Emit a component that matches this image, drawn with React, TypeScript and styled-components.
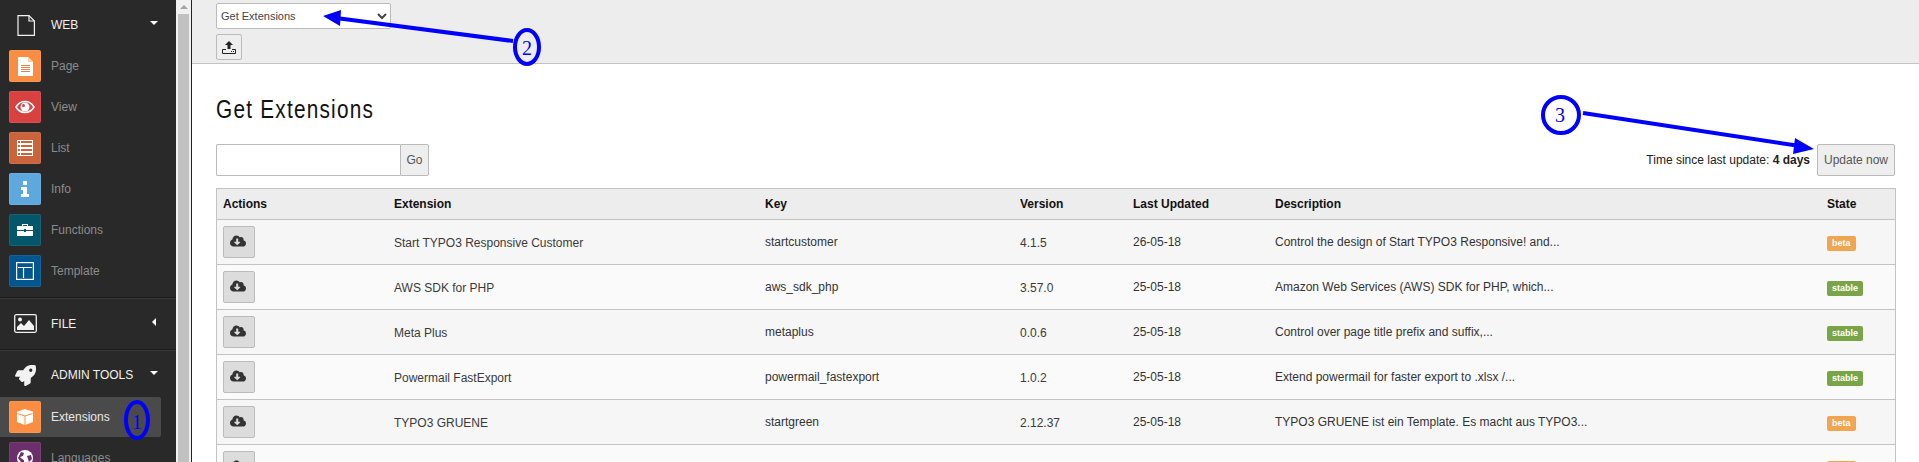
import React from "react";
import styled, { createGlobalStyle } from "styled-components";
import { FaCloudDownloadAlt, FaRocket } from "react-icons/fa";

const GlobalStyle = createGlobalStyle`
  html, body {
    margin: 0;
    padding: 0;
    height: 462px;
    overflow: hidden;
    background: #fff;
    font-family: "Liberation Sans", Arial, sans-serif;
    font-size: 12px;
    color: #333;
  }
`;

const Page = styled.div`
  position: relative;
  display: flex;
  width: 1919px;
  height: 462px;
  overflow: hidden;
`;

const Sidebar = styled.nav`
  flex: 0 0 176px;
  background: #292929;
  overflow: hidden;
`;

const GroupHeader = styled.div<{ $height: number; $top?: number }>`
  display: flex;
  align-items: center;
  box-sizing: border-box;
  height: ${(p) => p.$height}px;
  padding: ${(p) => p.$top || 0}px 18px 0 14px;
  color: #f2f2f2;
`;

const GroupIcon = styled.span`
  flex: 0 0 23px;
  display: flex;
  justify-content: center;
  margin-right: 14px;
`;

const Caret = styled.span<{ $dir: "down" | "left" }>`
  margin-left: auto;
  margin-bottom: 4px;
  width: 0;
  height: 0;
  ${(p) =>
    p.$dir === "down"
      ? `border-left: 4px solid transparent;
         border-right: 4px solid transparent;
         border-top: 4px solid #fff;`
      : `margin-right: 2px;
         border-top: 4px solid transparent;
         border-bottom: 4px solid transparent;
         border-right: 4px solid #fff;`}
`;

const Separator = styled.div<{ $top?: number }>`
  height: 1px;
  margin-top: ${(p) => p.$top || 0}px;
  background: #1a1a1a;
  box-shadow: 0 1px 0 #3a3a3a;
`;

const Item = styled.div<{ $active?: boolean }>`
  display: flex;
  align-items: center;
  box-sizing: border-box;
  width: 161px;
  height: 40px;
  margin-bottom: 1px;
  padding-left: 9px;
  border-radius: 0 2px 2px 0;
  background: ${(p) => (p.$active ? "#4a4a4a" : "transparent")};
  color: ${(p) => (p.$active ? "#e8e8e8" : "#8c8c8c")};
`;

const ItemIcon = styled.span<{ $bg: string }>`
  flex: 0 0 32px;
  display: flex;
  align-items: center;
  justify-content: center;
  box-sizing: border-box;
  height: 32px;
  margin-right: 10px;
  border-radius: 2px;
  border: 1px solid rgba(255, 255, 255, 0.08);
  background: ${(p) => p.$bg};
`;

const ScrollTrack = styled.div`
  flex: 0 0 15px;
  display: flex;
  flex-direction: column;
  box-sizing: border-box;
  padding: 0 2px;
  background: #f1f1f1;
`;

const ScrollEdge = styled.div`
  flex: 0 0 1px;
  background: #222;
`;

const ScrollArrow = styled.div`
  flex: 0 0 14px;
  display: flex;
  align-items: center;
  justify-content: center;

  &::before {
    content: "";
    border-left: 4px solid transparent;
    border-right: 4px solid transparent;
    border-bottom: 4px solid #a3a3a3;
  }
`;

const ScrollThumb = styled.div`
  flex: 1;
  background: #c1c1c1;
`;

const Main = styled.main`
  flex: 1;
  min-width: 0;
  display: flex;
  flex-direction: column;
`;

const DocHeader = styled.header`
  flex: 0 0 64px;
  display: flex;
  flex-direction: column;
  align-items: flex-start;
  gap: 5px;
  box-sizing: border-box;
  padding: 3px 24px 0;
  background: #ededed;
  border-bottom: 1px solid #c3c3c3;
`;

const ModuleSelect = styled.select`
  width: 175px;
  height: 26px;
  box-sizing: border-box;
  padding: 0;
  border: 1px solid #bbb;
  border-radius: 2px;
  background: #fff;
  font-family: "Liberation Sans", Arial, sans-serif;
  font-size: 11px;
  color: #444;
`;

const IconButton = styled.button`
  display: flex;
  align-items: center;
  justify-content: center;
  width: 26px;
  height: 26px;
  padding: 0;
  border: 1px solid #bbb;
  border-radius: 2px;
  background: #eee;
`;

const Content = styled.section`
  padding: 0 23px 0 24px;
`;

const Title = styled.h1`
  margin: 0;
  padding: 30px 0 0;
  height: 50px;
  font-family: "Liberation Sans", sans-serif;
  font-size: 25px;
  font-weight: 400;
  line-height: 30px;
  letter-spacing: 1.5px;
  color: #111;
  transform: scaleX(0.83);
  transform-origin: left center;
`;

const ToolRow = styled.div`
  display: flex;
  align-items: flex-start;
  justify-content: space-between;
  height: 44px;
`;

const SearchGroup = styled.form`
  display: flex;
  height: 32px;
  margin: 0;
`;

const SearchInput = styled.input`
  width: 184px;
  box-sizing: border-box;
  padding: 0 6px;
  border: 1px solid #bbb;
  border-right: 0;
  border-radius: 2px 0 0 2px;
  background: #fff;
`;

const GoButton = styled.button`
  width: 29px;
  padding: 0;
  border: 1px solid #bbb;
  border-radius: 0 2px 2px 0;
  background: #eee;
  font-family: "Liberation Sans", Arial, sans-serif;
  font-size: 12px;
  color: #555;
`;

const UpdateInfo = styled.div`
  display: flex;
  align-items: center;
  gap: 7px;
  margin-right: 1px;
  color: #222;
`;

const UpdateButton = styled.button`
  width: 78px;
  height: 32px;
  padding: 0;
  border: 1px solid #bbb;
  border-radius: 2px;
  background: #eee;
  font-family: "Liberation Sans", Arial, sans-serif;
  font-size: 12px;
  color: #555;
`;

const Table = styled.table`
  width: 1680px;
  table-layout: fixed;
  border-collapse: separate;
  border-spacing: 0;
  border: 1px solid #c3c3c3;
  border-bottom: 0;
`;

const HeadCell = styled.th<{ $width?: number }>`
  ${(p) => (p.$width ? `width: ${p.$width}px;` : "")}
  box-sizing: border-box;
  height: 31px;
  padding: 0 6px;
  border-bottom: 1px solid #c3c3c3;
  background: #ededed;
  text-align: left;
  font-size: 12px;
  font-weight: 700;
  color: #111;
`;

const Row = styled.tr<{ $odd: boolean }>`
  background: ${(p) => (p.$odd ? "#f6f6f6" : "#fafafa")};
`;

const Cell = styled.td<{ $lowered?: boolean }>`
  box-sizing: border-box;
  height: 45px;
  padding: ${(p) => (p.$lowered ? 2 : 0)}px 6px 0;
  border-bottom: 1px solid #c3c3c3;
  vertical-align: middle;
  color: ${(p) => (p.$lowered ? "#3a3a3a" : "#333")};
  white-space: nowrap;
  overflow: hidden;
`;

const DownloadButton = styled.button`
  display: flex;
  align-items: center;
  justify-content: center;
  width: 32px;
  height: 32px;
  padding: 0 2px 3px 0;
  border: 1px solid #bbb;
  border-radius: 2px;
  background: #dcdcdc;
  color: #333;
`;

const Badge = styled.span<{ $state: string }>`
  display: inline-block;
  box-sizing: border-box;
  height: 15px;
  padding: 0 5px;
  border-radius: 2px;
  background: ${(p) => (p.$state === "beta" ? "#f0a54e" : "#79a548")};
  color: #fff;
  font-size: 9px;
  font-weight: 700;
  line-height: 14px;
`;

const Overlay = styled.svg`
  position: absolute;
  top: 0;
  left: 0;
  pointer-events: none;
`;

const Mark = styled.text`
  font-family: "Liberation Serif", serif;
  font-size: 20px;
  fill: #0000ff;
  text-anchor: middle;
`;

const PageIcon = () => (
  <svg width="15" height="19" viewBox="0 0 15 19">
    <path d="M0 0h10l5 5v14H0z" fill="#fff" />
    <path d="M10 0l5 5h-5z" fill="#fbd0ae" />
    <path d="M3 8.500h9M3 10.500h9M3 12.500h9M3 14.500h9" stroke="#e8824a" strokeWidth="1" />
  </svg>
);

const ViewIcon = () => (
  <svg width="20" height="14" viewBox="0 0 20 14">
    <path
      d="M1 7c2-3.400 5-5.500 9-5.500s7 2.100 9 5.500c-2 3.400-5 5.500-9 5.500S3 10.400 1 7z"
      fill="none"
      stroke="#fff"
      strokeWidth="1.500"
    />
    <circle cx="10" cy="7" r="4.500" fill="#fff" />
    <circle cx="8.500" cy="5.500" r="1.500" fill="#d94040" />
  </svg>
);

const ListIcon = () => (
  <svg width="16" height="16" viewBox="0 0 16 16" fill="none" stroke="#fff">
    <rect x="0.500" y="0.500" width="15" height="3" />
    <rect x="0.500" y="4.500" width="15" height="3" />
    <rect x="0.500" y="8.500" width="15" height="3" />
    <rect x="0.500" y="12.500" width="15" height="3" />
    <path d="M3.500 0v16" />
  </svg>
);

const InfoIcon = () => (
  <svg width="8" height="16" viewBox="0 0 8 16" fill="#fff">
    <rect x="2" y="0" width="4" height="4" />
    <path d="M0 6h6v7h2v3H0v-3h2V9H0z" />
  </svg>
);

const ToolboxIcon = () => (
  <svg width="16" height="14" viewBox="0 0 16 14" fill="#fff">
    <path d="M5 3V1h6v2h-1V2H6v1z" />
    <path d="M0 3h16v4H9V6H7v1H0z" />
    <path d="M0 8h7v1h2V8h7v5H0z" />
  </svg>
);

const TemplateIcon = () => (
  <svg width="18" height="18" viewBox="0 0 18 18" fill="none" stroke="#fff" strokeWidth="1.200">
    <rect x="0.600" y="0.600" width="16.800" height="16.800" />
    <path d="M2 5.500h14M7.500 6v10" />
  </svg>
);

const BoxIcon = () => (
  <svg width="16" height="16" viewBox="0 0 16 16">
    <path d="M8 0l8 2.800v10.200L8 16 0 13V2.800z" fill="#fff" />
    <path d="M0.500 4.500L8 7l7.500-2.500M8 7v9" stroke="#f98e42" strokeWidth="1" fill="none" />
  </svg>
);

const GlobeIcon = () => (
  <svg width="16" height="16" viewBox="0 0 16 16">
    <circle cx="8" cy="8" r="8" fill="#fff" />
    <path d="M4 2l3 1-1 3-3 1 2 2 2 1v4l-3-2-3-4zM10 6l4-1 1 4-3 3-1-3z" fill="#6b2f6b" />
  </svg>
);

const DocOutlineIcon = () => (
  <svg width="18" height="21" viewBox="0 0 18 21" fill="none" stroke="#f2f2f2" strokeWidth="1.200">
    <path d="M1 .6h11l5.400 5.400v14.400H1z" />
    <path d="M12 .6v5.400h5.400" />
  </svg>
);

const ImageIcon = () => (
  <svg width="23" height="19" viewBox="0 0 23 19">
    <rect x=".7" y=".7" width="21.600" height="17.600" rx="1.500" fill="none" stroke="#f2f2f2" strokeWidth="1.300" />
    <circle cx="6" cy="5.500" r="2" fill="#f2f2f2" />
    <path d="M3 16v-3l4-4 3 3 5-6 5 6v4z" fill="#f2f2f2" />
  </svg>
);

const UploadIcon = () => (
  <svg width="14" height="13" viewBox="0 0 14 13">
    <path d="M7 0l4 4H8.500v4h-3V4H3z" fill="#222" />
    <path d="M.5 8.500h3.500M10 8.500h3.500v4H.5v-4" fill="none" stroke="#222" />
    <path d="M9 10.500h1M11 10.500h1" stroke="#222" />
  </svg>
);

const webItems = [
  { label: "Page", bg: "#f98e42", icon: <PageIcon /> },
  { label: "View", bg: "#d94040", icon: <ViewIcon /> },
  { label: "List", bg: "#c9643c", icon: <ListIcon /> },
  { label: "Info", bg: "#5da9de", icon: <InfoIcon /> },
  { label: "Functions", bg: "#04566a", icon: <ToolboxIcon /> },
  { label: "Template", bg: "#03568f", icon: <TemplateIcon /> },
];

const extensions = [
  ["Start TYPO3 Responsive Customer", "startcustomer", "4.1.5", "26-05-18", "Control the design of Start TYPO3 Responsive! and...", "beta"],
  ["AWS SDK for PHP", "aws_sdk_php", "3.57.0", "25-05-18", "Amazon Web Services (AWS) SDK for PHP, which...", "stable"],
  ["Meta Plus", "metaplus", "0.0.6", "25-05-18", "Control over page title prefix and suffix,...", "stable"],
  ["Powermail FastExport", "powermail_fastexport", "1.0.2", "25-05-18", "Extend powermail for faster export to .xlsx /...", "stable"],
  ["TYPO3 GRUENE", "startgreen", "2.12.37", "25-05-18", "TYPO3 GRUENE ist ein Template. Es macht aus TYPO3...", "beta"],
  ["", "", "", "", "", "beta"],
];

const App = () => {
  return (
    <Page>
      <GlobalStyle />
      <Sidebar>
        <GroupHeader $height={46} $top={4}>
          <GroupIcon>
            <DocOutlineIcon />
          </GroupIcon>
          WEB
          <Caret $dir="down" />
        </GroupHeader>
        {webItems.map((item) => (
          <Item key={item.label}>
            <ItemIcon $bg={item.bg}>{item.icon}</ItemIcon>
            {item.label}
          </Item>
        ))}
        <Separator $top={6} />
        <GroupHeader $height={51}>
          <GroupIcon>
            <ImageIcon />
          </GroupIcon>
          FILE
          <Caret $dir="left" />
        </GroupHeader>
        <Separator />
        <GroupHeader $height={47} $top={3}>
          <GroupIcon>
            <FaRocket size={21} color="#f2f2f2" />
          </GroupIcon>
          ADMIN TOOLS
          <Caret $dir="down" />
        </GroupHeader>
        <Item $active>
          <ItemIcon $bg="#f98e42">
            <BoxIcon />
          </ItemIcon>
          Extensions
        </Item>
        <Item>
          <ItemIcon $bg="#6b2f6b">
            <GlobeIcon />
          </ItemIcon>
          Languages
        </Item>
      </Sidebar>
      <ScrollTrack>
        <ScrollArrow />
        <ScrollThumb />
      </ScrollTrack>
      <ScrollEdge />
      <Main>
        <DocHeader>
          <ModuleSelect defaultValue="get">
            <option value="get">Get Extensions</option>
          </ModuleSelect>
          <IconButton>
            <UploadIcon />
          </IconButton>
        </DocHeader>
        <Content>
          <Title>Get Extensions</Title>
          <ToolRow>
            <SearchGroup>
              <SearchInput />
              <GoButton type="button">Go</GoButton>
            </SearchGroup>
            <UpdateInfo>
              <span>
                Time since last update: <b>4 days</b>
              </span>
              <UpdateButton>Update now</UpdateButton>
            </UpdateInfo>
          </ToolRow>
          <Table>
            <thead>
              <tr>
                <HeadCell $width={171}>Actions</HeadCell>
                <HeadCell $width={371}>Extension</HeadCell>
                <HeadCell $width={255}>Key</HeadCell>
                <HeadCell $width={113}>Version</HeadCell>
                <HeadCell $width={142}>Last Updated</HeadCell>
                <HeadCell $width={552}>Description</HeadCell>
                <HeadCell>State</HeadCell>
              </tr>
            </thead>
            <tbody>
              {extensions.map((ext, i) => (
                <Row key={i} $odd={i % 2 === 0}>
                  <Cell>
                    <DownloadButton>
                      <FaCloudDownloadAlt size={16} />
                    </DownloadButton>
                  </Cell>
                  <Cell $lowered>{ext[0]}</Cell>
                  <Cell>{ext[1]}</Cell>
                  <Cell $lowered>{ext[2]}</Cell>
                  <Cell>{ext[3]}</Cell>
                  <Cell>{ext[4]}</Cell>
                  <Cell $lowered>
                    <Badge $state={ext[5]}>{ext[5]}</Badge>
                  </Cell>
                </Row>
              ))}
            </tbody>
          </Table>
        </Content>
      </Main>
      <Overlay width="1919" height="462" viewBox="0 0 1919 462">
        <ellipse cx="137" cy="420" rx="11" ry="18" fill="none" stroke="#0000ff" strokeWidth="4" />
        <Mark x="137" y="429">1</Mark>
        <path d="M513 41L336 18" stroke="#0000ff" strokeWidth="4" fill="none" />
        <path d="M323 16L341 10L340 26z" fill="#0000ff" />
        <ellipse cx="527" cy="47" rx="12" ry="17" fill="none" stroke="#0000ff" strokeWidth="4" />
        <Mark x="527" y="55">2</Mark>
        <ellipse cx="1561" cy="115" rx="18" ry="18" fill="none" stroke="#0000ff" strokeWidth="4" />
        <Mark x="1560" y="122">3</Mark>
        <path d="M1583 113L1800 146" stroke="#0000ff" strokeWidth="4" fill="none" />
        <path d="M1814 149L1795 138L1793 154z" fill="#0000ff" />
      </Overlay>
    </Page>
  );
};

export default App;
